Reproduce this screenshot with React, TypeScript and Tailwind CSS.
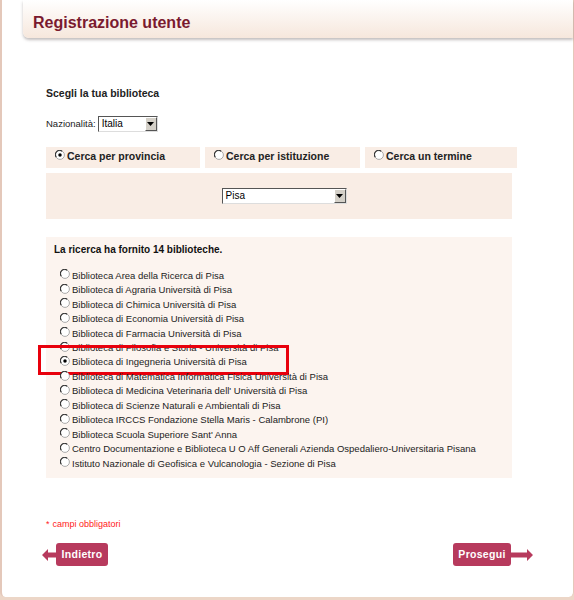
import React from "react";

const libraries = [
  "Biblioteca Area della Ricerca di Pisa",
  "Biblioteca di Agraria Università di Pisa",
  "Biblioteca di Chimica Università di Pisa",
  "Biblioteca di Economia Università di Pisa",
  "Biblioteca di Farmacia Università di Pisa",
  "Biblioteca di Filosofia e Storia - Università di Pisa",
  "Biblioteca di Ingegneria Università di Pisa",
  "Biblioteca di Matematica Informatica Fisica Università di Pisa",
  "Biblioteca di Medicina Veterinaria dell' Università di Pisa",
  "Biblioteca di Scienze Naturali e Ambientali di Pisa",
  "Biblioteca IRCCS Fondazione Stella Maris - Calambrone (PI)",
  "Biblioteca Scuola Superiore Sant' Anna",
  "Centro Documentazione e Biblioteca U O Aff Generali Azienda Ospedaliero-Universitaria Pisana",
  "Istituto Nazionale di Geofisica e Vulcanologia - Sezione di Pisa",
];

const Radio = ({ checked }: { checked?: boolean }) => (
  <svg width="10" height="10" viewBox="0 0 12 12" className="shrink-0">
    <circle cx="6" cy="6" r="5.3" fill="#fff" stroke="#9a9a9a" strokeWidth="1" />
    <path d="M1.5 8.5 A5 5 0 0 1 8.5 1.5" fill="none" stroke="#333" strokeWidth="1.3" />
    {checked && <circle cx="6" cy="6" r="2.1" fill="#000" />}
  </svg>
);

const Select = ({ value, width }: { value: string; width: string }) => (
  <div className={`flex h-[16px] ${width} items-stretch border border-t-[#555] border-l-[#555] border-b-[#ddd] border-r-[#ddd] bg-white`}>
    <span className="flex-1 pl-[3px] text-[10px] leading-[14px] text-black">{value}</span>
    <span className="flex w-[12px] items-center justify-center border border-t-white border-l-white border-b-[#555] border-r-[#555] bg-[#d4d0c8]">
      <svg width="7" height="4" viewBox="0 0 7 4">
        <path d="M0 0 H7 L3.5 4 Z" fill="#000" />
      </svg>
    </span>
  </div>
);

const Tab = ({ label, checked, grow }: { label: string; checked?: boolean; grow: string }) => (
  <div className={`flex h-[21px] ${grow} items-center gap-[2px] bg-[#f9ede5] pl-[9px] text-[10.5px] font-bold text-[#222]`}>
    <span className="-mt-[4px]">
      <Radio checked={checked} />
    </span>
    <span>{label}</span>
  </div>
);

export default function App() {
  return (
    <div className="h-[600px] w-full bg-[#ecd6c7]" style={{ fontFamily: '"Liberation Sans", Arial, sans-serif' }}>
      <div className="flex h-[597px] flex-col rounded-b-[5px] border-l-2 border-r border-[#e4c8ba] bg-white">
        <div className="ml-[21px] flex h-[38px] items-end rounded-bl-[6px] bg-gradient-to-b from-white to-[#f6e7dc] pb-[3px] pl-[10px] shadow-[0_2px_3px_rgba(120,110,110,0.45)]">
          <h1 className="text-[16px] font-bold text-[#7a1a2f]">Registrazione utente</h1>
        </div>

        <div className="flex flex-col pl-[44px] pr-[61px] pt-[48px]">
          <p className="text-[10.5px] font-bold text-[#222]">Scegli la tua biblioteca</p>

          <div className="mt-[14px] flex items-center gap-[2px] text-[9.5px] text-[#222]">
            <span>Nazionalità:</span>
            <Select value="Italia" width="w-[60px]" />
          </div>

          <div className="-mr-[5px] mt-[15px] flex gap-[5px]">
            <Tab label="Cerca per provincia" checked grow="w-[154px]" />
            <Tab label="Cerca per istituzione" grow="w-[155px]" />
            <Tab label="Cerca un termine" grow="flex-1" />
          </div>

          <div className="mt-[5px] flex h-[46px] items-center justify-center bg-[#f9ede5] pl-[10px]">
            <Select value="Pisa" width="w-[125px]" />
          </div>

          <div className="mt-[18px] flex h-[241px] flex-col bg-[#fcf4ef] pl-[8px] pt-[5px]">
            <p className="text-[10px] font-bold text-[#111]">La ricerca ha fornito 14 biblioteche.</p>
            <ul className="mt-[12px] flex flex-col pl-[6px]">
              {libraries.map((name, i) => (
                <li key={name} className="relative flex h-[14.45px] items-center gap-[2px] text-[9.5px] text-[#222]">
                  <span className="-mt-[3px]">
                    <Radio checked={i === 6} />
                  </span>
                  <span className="whitespace-nowrap">{name}</span>
                  {i === 6 && (
                    <span className="absolute left-[-22px] top-[-10px] h-[30px] w-[251px] border-[3px] border-[#e8000c]" />
                  )}
                </li>
              ))}
            </ul>
          </div>

          <p className="mt-[40px] text-[9px] text-[#ff1a1a]">
            <span className="mr-[3px]">*</span>campi obbligatori
          </p>

          <div className="-mr-[21px] mt-[12px] flex items-center justify-between">
            <div className="ml-[-4px] flex items-center">
              <svg width="14" height="12" viewBox="0 0 14 12">
                <path d="M0 6 L6 0 V3.5 H14 V8.5 H6 V12 Z" fill="#b73a5d" />
              </svg>
              <button className="h-[23px] w-[52px] rounded-[3px] bg-[#b73a5d] text-[10.5px] font-bold tracking-[0.3px] text-white">
                Indietro
              </button>
            </div>
            <div className="flex items-center">
              <button className="h-[23px] w-[58px] rounded-[3px] bg-[#b73a5d] text-[10.5px] font-bold tracking-[0.3px] text-white">
                Prosegui
              </button>
              <svg width="22" height="12" viewBox="0 0 22 12">
                <path d="M22 6 L16 0 V3.5 H0 V8.5 H16 V12 Z" fill="#b73a5d" />
              </svg>
            </div>
          </div>
        </div>
      </div>
    </div>
  );
}
